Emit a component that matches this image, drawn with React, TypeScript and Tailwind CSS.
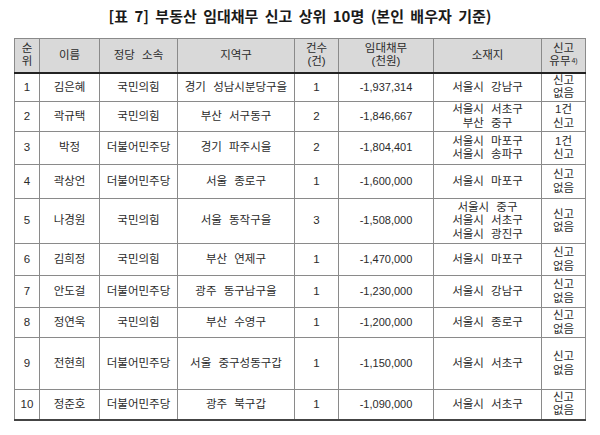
import React from 'react';

type Row = {
    rank: string;
    name: string;
    party: string;
    district: string;
    count: string;
    debt: string;
    places: string[];
    report: [string, string];
    h: string;
};

const rows: Row[] = [
    { rank: '1', name: '김은혜', party: '국민의힘', district: '경기 성남시분당구을', count: '1', debt: '-1,937,314', places: ['서울시 강남구'], report: ['신고', '없음'], h: 'h-[29px]' },
    { rank: '2', name: '곽규택', party: '국민의힘', district: '부산 서구동구', count: '2', debt: '-1,846,667', places: ['서울시 서초구', '부산 중구'], report: ['1건', '신고'], h: 'h-[30px]' },
    { rank: '3', name: '박정', party: '더불어민주당', district: '경기 파주시을', count: '2', debt: '-1,804,401', places: ['서울시 마포구', '서울시 송파구'], report: ['1건', '신고'], h: 'h-[33px]' },
    { rank: '4', name: '곽상언', party: '더불어민주당', district: '서울 종로구', count: '1', debt: '-1,600,000', places: ['서울시 마포구'], report: ['신고', '없음'], h: 'h-[34px]' },
    { rank: '5', name: '나경원', party: '국민의힘', district: '서울 동작구을', count: '3', debt: '-1,508,000', places: ['서울시 중구', '서울시 서초구', '서울시 광진구'], report: ['신고', '없음'], h: 'h-[45px]' },
    { rank: '6', name: '김희정', party: '국민의힘', district: '부산 연제구', count: '1', debt: '-1,470,000', places: ['서울시 마포구'], report: ['신고', '없음'], h: 'h-[32px]' },
    { rank: '7', name: '안도걸', party: '더불어민주당', district: '광주 동구남구을', count: '1', debt: '-1,230,000', places: ['서울시 강남구'], report: ['신고', '없음'], h: 'h-[32px]' },
    { rank: '8', name: '정연욱', party: '국민의힘', district: '부산 수영구', count: '1', debt: '-1,200,000', places: ['서울시 종로구'], report: ['신고', '없음'], h: 'h-[30px]' },
    { rank: '9', name: '전현희', party: '더불어민주당', district: '서울 중구성동구갑', count: '1', debt: '-1,150,000', places: ['서울시 서초구'], report: ['신고', '없음'], h: 'h-[52px]' },
    { rank: '10', name: '정준호', party: '더불어민주당', district: '광주 북구갑', count: '1', debt: '-1,090,000', places: ['서울시 서초구'], report: ['신고', '없음'], h: 'h-[30px]' },
];

const cell = 'border border-[#8a8a8a] p-0 text-center align-middle';

const App = () => {
    return (
        <div className="w-[600px] h-[435px] bg-white text-[#2b2b2b] font-['Liberation_Sans','Noto_Sans_CJK_KR',sans-serif] [word-spacing:4px]">
            <h1 className="pt-[6px] h-[38px] text-center text-[15px] font-bold leading-[20px] text-[#1a1a1a] font-['Noto_Sans_CJK_KR',sans-serif] [word-spacing:3px]">
                [표 7] 부동산 임대채무 신고 상위 10명 (본인 배우자 기준)
            </h1>
            <div className="pl-[14px]">
                <table className="table-fixed border-collapse w-[571px] text-[11.5px] leading-[13.5px] border-[1.5px] border-[#555]">
                    <colgroup>
                        <col className="w-[25px]" />
                        <col className="w-[60px]" />
                        <col className="w-[78px]" />
                        <col className="w-[117px]" />
                        <col className="w-[44px]" />
                        <col className="w-[95px]" />
                        <col className="w-[108px]" />
                        <col className="w-[44px]" />
                    </colgroup>
                    <thead>
                        <tr className="h-[34px] bg-[#d9d9d9] border-b-2 border-b-[#222]">
                            <th className={`${cell} font-normal`}>
                                <div>순</div>
                                <div>위</div>
                            </th>
                            <th className={`${cell} font-normal`}>이름</th>
                            <th className={`${cell} font-normal`}>정당 소속</th>
                            <th className={`${cell} font-normal`}>지역구</th>
                            <th className={`${cell} font-normal`}>
                                <div>건수</div>
                                <div>(건)</div>
                            </th>
                            <th className={`${cell} font-normal`}>
                                <div>임대채무</div>
                                <div>(천원)</div>
                            </th>
                            <th className={`${cell} font-normal`}>소재지</th>
                            <th className={`${cell} font-normal`}>
                                <div>신고</div>
                                <div>
                                    유무<sup className="text-[7px] top-[-0.3em] ml-[1px]">4)</sup>
                                </div>
                            </th>
                        </tr>
                    </thead>
                    <tbody>
                        {rows.map((r) => (
                            <tr key={r.rank} className={`${r.h} last:border-b-2 last:border-b-[#444]`}>
                                <td className={cell}>{r.rank}</td>
                                <td className={cell}>{r.name}</td>
                                <td className={cell}>{r.party}</td>
                                <td className={cell}>{r.district}</td>
                                <td className={cell}>{r.count}</td>
                                <td className={`${cell} text-[11px]`}>{r.debt}</td>
                                <td className={cell}>
                                    {r.places.map((p) => (
                                        <div key={p}>{p}</div>
                                    ))}
                                </td>
                                <td className={cell}>
                                    <div>{r.report[0]}</div>
                                    <div>{r.report[1]}</div>
                                </td>
                            </tr>
                        ))}
                    </tbody>
                </table>
            </div>
        </div>
    );
};

export default App;
